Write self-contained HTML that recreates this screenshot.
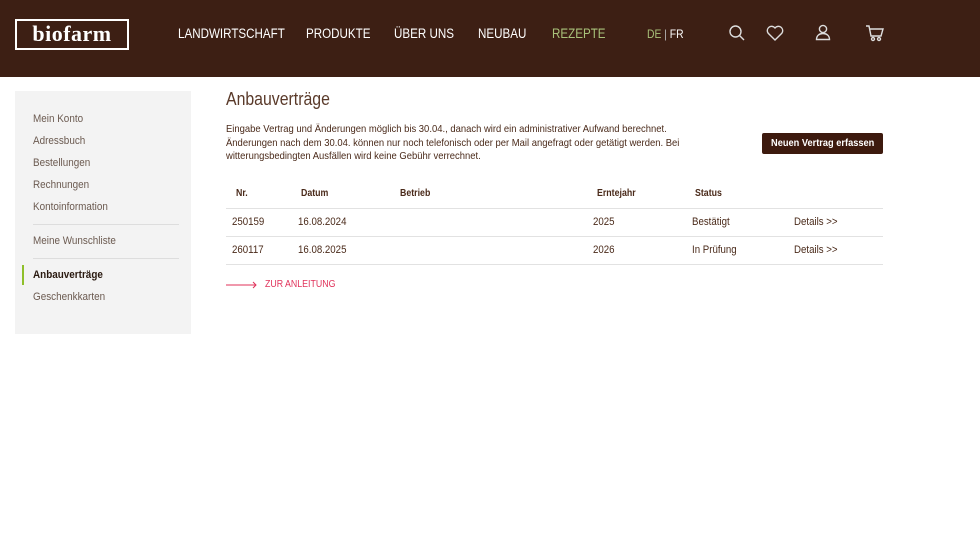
<!DOCTYPE html>
<html><head><meta charset="utf-8"><style>
*{margin:0;padding:0;box-sizing:border-box}
body{width:980px;height:551px;background:#fff;font-family:"Liberation Sans",sans-serif;color:#4a2a1a;position:relative;overflow:hidden}
.hdr{position:absolute;left:0;top:0;width:980px;height:77px;background:#3d1f14}
.logo{position:absolute;left:15px;top:19px;width:114px;height:31px;border:2px solid #fff;color:#fff;font-family:"Liberation Serif",serif;font-weight:bold;font-size:22px;line-height:26px;text-align:center;letter-spacing:0.5px}
.nav{position:absolute;top:26px;color:#fff;font-size:13.5px;white-space:nowrap;transform:scaleX(.86);transform-origin:left}
.side{position:absolute;left:15px;top:91px;width:176px;height:243px;background:#f3f3f3}
.side a{position:absolute;left:18px;font-size:11px;color:#6b5a50;white-space:nowrap;transform:scaleX(.9);transform-origin:left}
.side hr{position:absolute;left:18px;width:146px;border:0;border-top:1px solid #ddd}
.t{position:absolute;white-space:nowrap;font-size:11px;color:#4a2a1a;transform:scaleX(.88);transform-origin:left}
.b{font-weight:bold}
.line{position:absolute;left:226px;width:657px;border-top:1px solid #e2e2e2}
</style></head><body>
<div class="hdr">
<div class="logo">biofarm</div>
<div class="nav" style="left:178px">LANDWIRTSCHAFT</div>
<div class="nav" style="left:306px">PRODUKTE</div>
<div class="nav" style="left:394px">ÜBER UNS</div>
<div class="nav" style="left:478px">NEUBAU</div>
<div class="nav" style="left:552px;color:#a9c27a">REZEPTE</div>
<div class="nav" style="left:647px;font-size:12px;top:27px"><span style="color:#a9c27a">DE</span> <span style="color:#bbb">|</span> FR</div>
<svg style="position:absolute;left:728px;top:24px" width="18" height="18" viewBox="0 0 18 18" fill="none" stroke="#ddd" stroke-width="1.4"><circle cx="7.5" cy="7.5" r="5.5"/><path d="M11.5 11.5L16 16"/></svg>
<svg style="position:absolute;left:766px;top:25px" width="18" height="16" viewBox="0 0 18 16" fill="none" stroke="#ddd" stroke-width="1.4"><path d="M9 15L2.2 8.3A4 4 0 0 1 9 3a4 4 0 0 1 6.8 5.3Z"/></svg>
<svg style="position:absolute;left:815px;top:24px" width="16" height="17" viewBox="0 0 16 17" fill="none" stroke="#ddd" stroke-width="1.4"><circle cx="8" cy="5" r="3.6"/><path d="M1.5 15.5c0-4 3-6 6.5-6s6.5 2 6.5 6Z"/></svg>
<svg style="position:absolute;left:865px;top:24px" width="19" height="18" viewBox="0 0 19 18" fill="none" stroke="#ddd" stroke-width="1.4"><path d="M1 2h3l2 10h10l2-7H5"/><circle cx="8" cy="15" r="1.5"/><circle cx="14" cy="15" r="1.5"/></svg>
</div>
<div class="side">
<a style="top:22px">Mein Konto</a>
<a style="top:44px">Adressbuch</a>
<a style="top:66px">Bestellungen</a>
<a style="top:88px">Rechnungen</a>
<a style="top:110px">Kontoinformation</a>
<hr style="top:133px">
<a style="top:144px">Meine Wunschliste</a>
<hr style="top:167px">
<div style="position:absolute;left:7px;top:174px;width:2px;height:20px;background:#8fbf2a"></div>
<a style="top:178px;color:#2a1a10;font-weight:bold">Anbauverträge</a>
<a style="top:200px">Geschenkkarten</a>
</div>
<div class="t" style="left:226px;top:89px;font-size:18px;color:#5a3a2a">Anbauverträge</div>
<div class="t" style="left:226px;top:123px;line-height:13.5px;font-size:10.5px;transform:scaleX(.9)">Eingabe Vertrag und Änderungen möglich bis 30.04., danach wird ein administrativer Aufwand berechnet.<br>Änderungen nach dem 30.04. können nur noch telefonisch oder per Mail angefragt oder getätigt werden. Bei<br>witterungsbedingten Ausfällen wird keine Gebühr verrechnet.</div>
<div style="position:absolute;left:762px;top:133px;width:121px;height:21px;background:#3d1a0e;border-radius:2px;color:#fff;font-size:10.5px;font-weight:bold;text-align:center;line-height:21px"><span style="display:inline-block;transform:scaleX(.88)">Neuen Vertrag erfassen</span></div>
<div class="t b" style="left:236px;top:188px;font-size:10px">Nr.</div>
<div class="t b" style="left:301px;top:188px;font-size:10px">Datum</div>
<div class="t b" style="left:400px;top:188px;font-size:10px">Betrieb</div>
<div class="t b" style="left:597px;top:188px;font-size:10px">Erntejahr</div>
<div class="t b" style="left:695px;top:188px;font-size:10px">Status</div>
<div class="line" style="top:208px"></div>
<div class="t" style="left:232px;top:216px">250159</div>
<div class="t" style="left:298px;top:216px">16.08.2024</div>
<div class="t" style="left:593px;top:216px">2025</div>
<div class="t" style="left:692px;top:216px">Bestätigt</div>
<div class="t" style="left:794px;top:216px">Details &gt;&gt;</div>
<div class="line" style="top:236px"></div>
<div class="t" style="left:232px;top:244px">260117</div>
<div class="t" style="left:298px;top:244px">16.08.2025</div>
<div class="t" style="left:593px;top:244px">2026</div>
<div class="t" style="left:692px;top:244px">In Prüfung</div>
<div class="t" style="left:794px;top:244px">Details &gt;&gt;</div>
<div class="line" style="top:264px"></div>
<svg style="position:absolute;left:226px;top:281px" width="32" height="8" viewBox="0 0 32 8" fill="none" stroke="#e0325a" stroke-width="1"><path d="M0 4H30M27 1l3 3-3 3"/></svg>
<div class="t" style="left:265px;top:279px;color:#e0325a;font-size:10px">ZUR ANLEITUNG</div>
</body></html>
